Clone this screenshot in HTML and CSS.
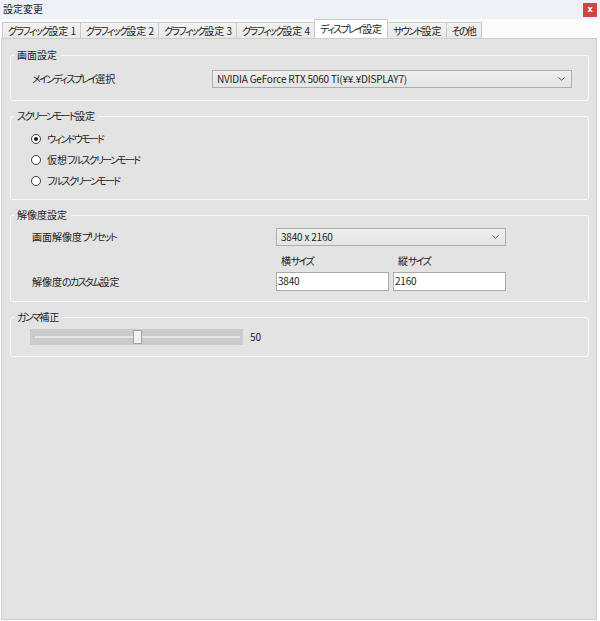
FILE: index.html
```html
<!DOCTYPE html>
<html lang="ja">
<head>
<meta charset="utf-8">
<title>設定変更</title>
<link rel="stylesheet" href="styles.css">
</head>
<body>
<div class="window">
  <div class="titlebar">
    <span class="title">設定変更</span>
    <span class="close">x</span>
  </div>
  <div class="tabs">
    <div class="tab"><span class="k">グラフィック</span>設定 1</div>
    <div class="tab"><span class="k">グラフィック</span>設定 2</div>
    <div class="tab"><span class="k">グラフィック</span>設定 3</div>
    <div class="tab"><span class="k">グラフィック</span>設定 4</div>
    <div class="tab active"><span class="k">ディスプレイ</span>設定</div>
    <div class="tab"><span class="k">サウンド</span>設定</div>
    <div class="tab"><span class="k">その</span>他</div>
  </div>
  <div class="panel">
    <fieldset class="group">
      <legend>画面設定</legend>
      <div class="body g1">
        <span class="label"><span class="k">メインディスプレイ</span>選択</span>
        <div class="select main-select">
          <span class="latin">NVIDIA GeForce RTX 5060 Ti(¥¥.¥DISPLAY7)</span>
          <svg class="chev" width="7" height="4" viewBox="0 0 7 4"><path d="M0.5 0.5 L3.5 3.2 L6.5 0.5" fill="none" stroke="#555" stroke-width="1"/></svg>
        </div>
      </div>
    </fieldset>

    <fieldset class="group">
      <legend><span class="k">スクリーンモード</span>設定</legend>
      <div class="body g2">
        <div class="radio-row"><span class="radio checked"></span><span class="k">ウィンドウモード</span></div>
        <div class="radio-row"><span class="radio"></span><span>仮想<span class="k">フルスクリーンモード</span></span></div>
        <div class="radio-row"><span class="radio"></span><span class="k">フルスクリーンモード</span></div>
      </div>
    </fieldset>

    <fieldset class="group">
      <legend>解像度設定</legend>
      <div class="body g3">
        <span class="label">画面解像度<span class="k">プリセット</span></span>
        <div class="select span2">
          <span class="latin">3840 x 2160</span>
          <svg class="chev" width="7" height="4" viewBox="0 0 7 4"><path d="M0.5 0.5 L3.5 3.2 L6.5 0.5" fill="none" stroke="#555" stroke-width="1"/></svg>
        </div>
        <span></span>
        <span class="sublabel">横<span class="k">サイズ</span></span>
        <span class="sublabel">縦<span class="k">サイズ</span></span>
        <span class="label">解像度<span class="k">のカスタム</span>設定</span>
        <div class="input latin">3840</div>
        <div class="input latin">2160</div>
      </div>
    </fieldset>

    <fieldset class="group">
      <legend><span class="k">ガンマ</span>補正</legend>
      <div class="body g4">
        <div class="slider">
          <div class="line"></div>
          <div class="thumb"></div>
        </div>
        <span class="value">50</span>
      </div>
    </fieldset>
  </div>
</div>
</body>
</html>
```

FILE: styles.css
```css
* { box-sizing: border-box; }

html, body {
  margin: 0;
  padding: 0;
  background: #ffffff;
}

body {
  font-family: "Noto Sans CJK JP", "Noto Sans", sans-serif;
  font-feature-settings: "palt";
  font-size: 10px;
  color: #1b1b1b;
}

.k {
  letter-spacing: -1.7px;
}

.latin {
  letter-spacing: -0.2px;
}

.window {
  width: 600px;
  height: 621px;
  display: flex;
  flex-direction: column;
}

.titlebar {
  height: 19px;
  background: #eef2f8;
  display: flex;
  align-items: center;
  justify-content: space-between;
  padding: 0 3px 2px 3px;
}

.title {
  line-height: 14px;
}

.close {
  width: 14px;
  height: 14px;
  background: #d04545;
  color: #fff;
  font-family: "DejaVu Sans", sans-serif;
  font-weight: bold;
  font-size: 8px;
  line-height: 13px;
  text-align: center;
  margin-top: 2px;
}

.tabs {
  height: 19px;
  display: flex;
  align-items: flex-end;
  padding-left: 2px;
  background: #fbfbfb;
}

.tab {
  height: 16px;
  padding: 0 4px 0 5px;
  line-height: 15px;
  background: linear-gradient(#f2f2f2, #e8e8e8);
  border: 1px solid #c9c9c9;
  border-bottom: none;
  margin-right: -1px;
  white-space: nowrap;
}

.tab.active {
  height: 19px;
  line-height: 17px;
  background: #ffffff;
  position: relative;
  z-index: 1;
  padding: 0 5px;
}

.panel {
  flex: 1;
  margin: 0 3px 1px 1px;
  background: #e3e3e3;
  border: 1px solid #cdcdcd;
  padding: 9px 7px 0 8px;
}

.group {
  margin: 0 0 8px 0;
  padding: 0;
  border: 1px solid #f8fafb;
  border-radius: 3px;
  min-width: 0;
}

.group legend {
  margin-left: 3px;
  padding: 0 4px 0 3px;
  line-height: 14px;
  font-size: 10px;
}

.label {
  line-height: 14px;
}

.body.g1 {
  padding: 8px 16px 12px 21px;
  display: grid;
  grid-template-columns: 180px 1fr;
  align-items: center;
}

.select {
  height: 18px;
  border: 1px solid #adadad;
  background: linear-gradient(#efefef, #e4e4e4);
  display: flex;
  align-items: center;
  justify-content: space-between;
  padding: 0 6px 0 4px;
  line-height: 14px;
  white-space: nowrap;
}

.chev { display: block; }

.body.g2 {
  padding: 5px 10px 8px 20px;
}

.radio-row {
  height: 21px;
  display: flex;
  align-items: center;
  gap: 6px;
}

.radio {
  width: 10px;
  height: 10px;
  border-radius: 50%;
  border: 1px solid #3a3a3a;
  background: #ffffff;
  display: flex;
  align-items: center;
  justify-content: center;
}

.radio.checked::after {
  content: "";
  width: 4px;
  height: 4px;
  border-radius: 50%;
  background: #1a1a1a;
}

.body.g3 {
  padding: 6px 10px 10px 21px;
  display: grid;
  grid-template-columns: 240px 113px 113px;
  column-gap: 4px;
  align-items: center;
}

.span2 {
  grid-column: span 2;
}

.sublabel {
  line-height: 14px;
  margin: 8px 0 4px 5px;
}

.input {
  height: 19px;
  background: #ffffff;
  border: 1px solid #a9a9a9;
  padding-left: 1px;
  line-height: 16px;
}

.body.g4 {
  padding: 5px 10px 11px 19px;
  display: flex;
  align-items: center;
  gap: 7px;
}

.slider {
  width: 213px;
  height: 16px;
  background: #cbcbcb;
  position: relative;
  display: flex;
  align-items: center;
  padding: 0 3px 0 5px;
}

.slider .line {
  flex: 1;
  height: 2px;
  background: #e7e7e7;
}

.slider .thumb {
  position: absolute;
  left: 103px;
  top: 1px;
  width: 9px;
  height: 14px;
  background: #f1f1f1;
  border: 1px solid #a3a3a3;
}

.value {
  line-height: 14px;
}
```
